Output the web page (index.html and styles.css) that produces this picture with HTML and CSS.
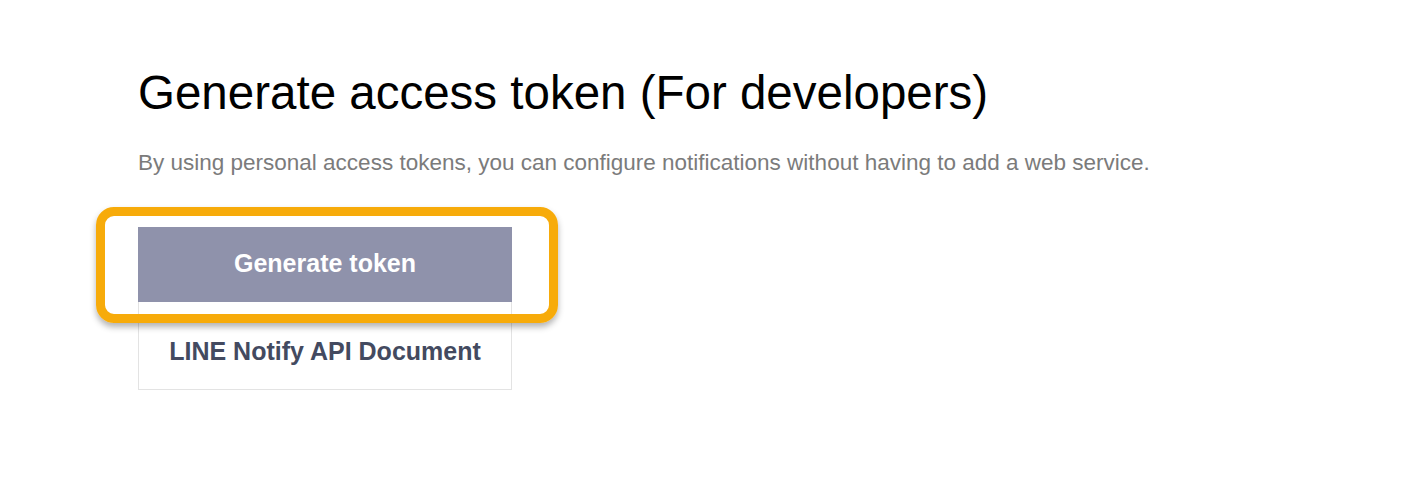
FILE: index.html
```html
<!DOCTYPE html>
<html>
<head>
<meta charset="utf-8">
<link rel="stylesheet" href="styles.css">
</head>
<body>
<main class="page">
  <h1 class="title">Generate access token (For developers)</h1>
  <p class="desc">By using personal access tokens, you can configure notifications without having to add a web service.</p>
  <div class="actions">
    <div class="highlight">
      <button class="btn btn-primary">Generate token</button>
    </div>
    <a class="btn btn-secondary">LINE Notify API Document</a>
  </div>
</main>
</body>
</html>
```

FILE: styles.css
```css
html, body {
  margin: 0;
  padding: 0;
  background: #ffffff;
}
body {
  font-family: "Liberation Sans", Arial, sans-serif;
}
.page {
  padding: 65px 0 0 138px;
}
.title {
  margin: 0;
  font-size: 47.5px;
  font-weight: normal;
  color: #000;
  line-height: 56px;
}
.desc {
  margin: 29px 0 0;
  font-size: 22.5px;
  line-height: 26px;
  color: #7b7b7b;
}
.actions {
  margin-top: 51px;
  width: 374px;
  display: flex;
  flex-direction: column;
  position: relative;
}
.highlight {
  position: relative;
}
.highlight::before {
  content: "";
  position: absolute;
  left: -42px;
  top: -20px;
  right: -46px;
  bottom: -21px;
  border: 9px solid #f7ab0a;
  border-radius: 18px;
  box-shadow: 0 4px 6px rgba(0,0,0,0.3);
  z-index: 1;
  pointer-events: none;
}
.btn {
  box-sizing: border-box;
  width: 374px;
  display: flex;
  align-items: center;
  justify-content: center;
  font-family: "Liberation Sans", Arial, sans-serif;
  font-weight: bold;
  font-size: 25px;
  border: none;
  margin: 0;
  padding: 0;
}
.btn-primary {
  height: 75px;
  padding-bottom: 2px;
  background: #8f92ab;
  color: #ffffff;
}
.btn-secondary {
  height: 88px;
  padding-top: 12px;
  border: 1px solid #e3e3e3;
  border-top: none;
  color: #434a60;
}
```
